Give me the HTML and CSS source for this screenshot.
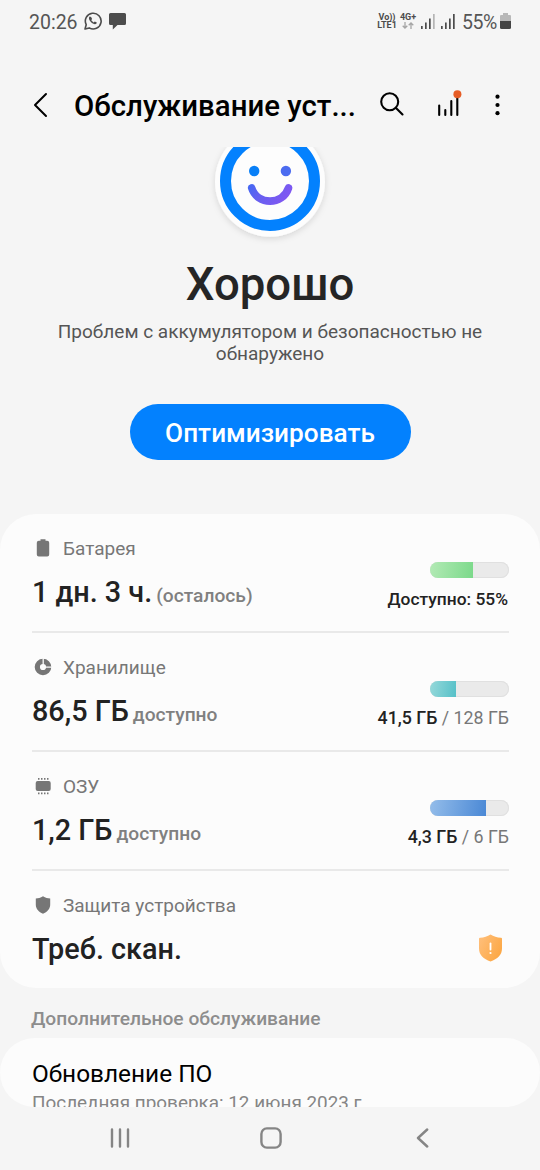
FILE: index.html
```html
<!DOCTYPE html>
<html lang="ru">
<head>
<meta charset="utf-8">
<title>Обслуживание устройства</title>
<link rel="stylesheet" href="styles.css">
</head>
<body>
<div class="screen">
  <div class="statusbar">
    <span class="clock">20:26</span>
    <svg class="wa" width="18" height="18" viewBox="0 0 18 18" fill="none" stroke="#4c4c4c" stroke-width="1.6"><path d="M1 17l1.2-4.300A7.900 7.900 0 1 1 5.200 15.900z" stroke-linejoin="round"/><path d="M5.600 4.600c-1.400 1.300-.6 3.600 1.300 5.500s4.400 2.900 5.600 1.500l.3-1-2-1.200-1.200 1c-1-.5-1.900-1.300-2.300-2.300l.8-1-1-2.200z" fill="#4c4c4c" stroke="none"/></svg>
    <svg class="msg" width="17" height="17" viewBox="0 0 17 17" fill="#4c4c4c"><path d="M1.500 0h14A1.500 1.500 0 0 1 17 1.500v9a1.500 1.500 0 0 1-1.500 1.500H8.500L3.800 16.500V12H1.500A1.500 1.500 0 0 1 0 10.500v-9A1.500 1.500 0 0 1 1.500 0z"/></svg>
    <span class="grow"></span>
    <span class="net lte"><b>Vo))</b><b>LTE1</b></span>
    <span class="net four"><b>4G+</b><svg width="12" height="7" viewBox="0 0 12 7" fill="none" stroke="#a5a5a5" stroke-width="1.300"><path d="M3 0v6M.7 3.700L3 6l2.300-2.300M9 7V1M6.700 3.300L9 1l2.300 2.300"/></svg></span>
    <svg class="sig" width="14" height="15" viewBox="0 0 14 15" fill="#4c4c4c"><path d="M0 12h1.700v3H0zM4 8.500h1.700V15H4zM8 4.500h1.700V15H8z"/><path d="M12 0h1.700v15H12z" fill="#b5b5b5"/></svg>
    <svg class="sig sig2" width="14" height="15" viewBox="0 0 14 15" fill="#4c4c4c"><path d="M0 12h1.700v3H0zM4 8.500h1.700V15H4zM8 4.500h1.700V15H8zM12 0h1.700v15H12z"/></svg>
    <span class="pct">55%</span>
    <svg class="bat" width="11" height="16" viewBox="0 0 11 16"><path d="M3 0h5v2h2a1 1 0 0 1 1 1v5H0V3a1 1 0 0 1 1-1h2z" fill="#b8b8b8"/><path d="M0 8h11v6.500a1.500 1.500 0 0 1-1.500 1.500h-8A1.500 1.500 0 0 1 0 14.500z" fill="#444"/></svg>
  </div>
  <header class="appbar">
    <svg class="back" width="15" height="26" viewBox="0 0 15 26" fill="none" stroke="#000" stroke-width="2" stroke-linecap="round" stroke-linejoin="round"><path d="M13 2L2 13l11 11"/></svg>
    <h1>Обслуживание уст...</h1>
    <svg class="search" width="24" height="24" viewBox="0 0 24 24" fill="none" stroke="#000" stroke-width="2.100" stroke-linecap="round"><circle cx="9.700" cy="9.700" r="8.500"/><path d="M16 16l6.500 6.500"/></svg>
    <svg class="stats" width="25" height="27" viewBox="0 0 25 27"><path d="M2.200 15.500V25M8.300 20v5M14.300 11v14M20.300 6v19" fill="none" stroke="#000" stroke-width="2.100" stroke-linecap="round"/><circle cx="20.400" cy="4.300" r="4" fill="#e65d26"/></svg>
    <svg class="more" width="5" height="22" viewBox="0 0 5 22"><circle cx="2.500" cy="2.700" r="2.100"/><circle cx="2.500" cy="11" r="2.100"/><circle cx="2.500" cy="19.200" r="2.100"/></svg>
  </header>
  <main class="content">
    <section class="hero">
      <svg class="face" width="140" height="104" viewBox="0 0 140 104">
        <defs>
          <linearGradient id="mood" gradientUnits="userSpaceOnUse" x1="45" y1="24" x2="86" y2="56"><stop offset="0" stop-color="#2a70f5"/><stop offset=".5" stop-color="#6560f0"/><stop offset="1" stop-color="#8257f2"/></linearGradient>
          <filter id="shade" x="-20%" y="-20%" width="140%" height="140%"><feDropShadow dx="0" dy="2" stdDeviation="3" flood-opacity=".13"/></filter>
        </defs>
        <circle cx="70" cy="34.700" r="55" fill="#fdfdfd" filter="url(#shade)"/>
        <circle cx="70" cy="34" r="44.500" fill="none" stroke="#0381fe" stroke-width="11"/>
        <circle cx="54.200" cy="24" r="5.200" fill="#087ff7"/><circle cx="85.900" cy="24" r="5.200" fill="#4c6cf0"/>
        <path d="M51.700 41C57 58.500 83 58.500 88.500 41" fill="none" stroke="url(#mood)" stroke-width="7.600" stroke-linecap="round"/>
      </svg>
      <h2>Хорошо</h2>
      <p>Проблем с аккумулятором и безопасностью не<br>обнаружено</p>
      <button>Оптимизировать</button>
    </section>
    <section class="card">
      <div class="row">
        <div class="info">
          <div class="label"><svg width="22" height="20" viewBox="0 0 22 20" fill="#767676"><path d="M8.500 1.200h5v1.500h1.700a2 2 0 0 1 2 2V16.500a2 2 0 0 1-2 2H6.800a2 2 0 0 1-2-2V4.700a2 2 0 0 1 2-2h1.700z"/></svg><span>Батарея</span></div>
          <div class="value"><strong>1 дн. 3 ч.</strong><em>(осталось)</em></div>
        </div>
        <div class="usage"><div class="bar"><i class="green" style="width:55%"></i></div><div class="detail avail"><b>Доступно: 55%</b></div></div>
      </div>
      <div class="row">
        <div class="info">
          <div class="label"><svg width="22" height="20" viewBox="0 0 22 20" fill="none"><circle cx="11" cy="10" r="5.700" stroke="#767676" stroke-width="5.200"/><path d="M11.200 10V1M11 10.200h9" stroke="#fcfcfc" stroke-width="1.300"/></svg><span>Хранилище</span></div>
          <div class="value"><strong>86,5 ГБ</strong><em>доступно</em></div>
        </div>
        <div class="usage"><div class="bar"><i class="teal" style="width:33%"></i></div><div class="detail"><b>41,5 ГБ</b> / 128 ГБ</div></div>
      </div>
      <div class="row">
        <div class="info">
          <div class="label"><svg width="22" height="20" viewBox="0 0 22 20" fill="#767676"><rect x="3.700" y="5" width="15" height="10" rx="2"/><path d="M6 2.800h10.500M6 17.300h10.500" stroke="#767676" stroke-width="1.800" stroke-dasharray="1.500 1.500"/></svg><span>ОЗУ</span></div>
          <div class="value"><strong>1,2 ГБ</strong><em>доступно</em></div>
        </div>
        <div class="usage"><div class="bar"><i class="blue" style="width:71.500%"></i></div><div class="detail"><b>4,3 ГБ</b> / 6 ГБ</div></div>
      </div>
      <div class="row last">
        <div class="info">
          <div class="label"><svg width="22" height="20" viewBox="0 0 22 20" fill="#767676"><path d="M11 1.200c2.500 1.500 4.800 2.100 7.200 2.300v6.300c0 4-3 7.200-7.200 9-4.200-1.800-7.200-5-7.200-9V3.500C6.200 3.300 8.500 2.700 11 1.200z"/></svg><span>Защита устройства</span></div>
          <div class="value"><strong>Треб. скан.</strong></div>
        </div>
        <svg class="alert" width="23" height="28" viewBox="0 0 23 28"><defs><linearGradient id="amber" x1="0" y1="0" x2="1" y2=".6"><stop offset="0" stop-color="#ffc07d"/><stop offset="1" stop-color="#fca846"/></linearGradient></defs><path d="M11.500.5c3 2 6.500 3 10.500 3.300a1 1 0 0 1 1 1V14.500c0 6.500-4.500 10.500-11.500 13C4.500 25 0 21 0 14.500V4.800a1 1 0 0 1 1-1C5 3.500 8.500 2.500 11.500.5z" fill="url(#amber)"/><path d="M11.500 9.500v6" stroke="#fff" stroke-width="1.800" stroke-linecap="round"/><circle cx="11.500" cy="19" r="1.100" fill="#fff"/></svg>
      </div>
    </section>
    <h3>Дополнительное обслуживание</h3>
    <section class="card update">
      <div class="name">Обновление ПО</div>
      <div class="note">Последняя проверка: 12 июня 2023 г.</div>
    </section>
  </main>
  <nav class="navbar">
    <svg width="20" height="20" viewBox="0 0 20 20" stroke="#858585" stroke-width="2.400" stroke-linecap="round"><path d="M2 1.500v17M10 1.500v17M18 1.500v17"/></svg>
    <svg class="home" width="22" height="22" viewBox="0 0 22 22" fill="none" stroke="#858585" stroke-width="2.400"><rect x="1.400" y="1.400" width="19.200" height="19.200" rx="5.500"/></svg>
    <svg width="13" height="20" viewBox="0 0 13 20" fill="none" stroke="#858585" stroke-width="2.400" stroke-linecap="round" stroke-linejoin="round"><path d="M11.200 1.500L2 10l9.200 8.500"/></svg>
  </nav>
</div>
</body>
</html>
```
FILE: styles.css
```css
* { box-sizing: border-box; }
body { margin: 0; background: #f5f5f5; font-family: Roboto, sans-serif; }
svg { display: block; flex: none; }
h1, h2, h3, p { margin: 0; }
.screen { width: 540px; height: 1170px; display: flex; flex-direction: column; overflow: hidden; white-space: nowrap; }

.statusbar { height: 44px; display: flex; align-items: center; padding: 0 29px 0 29px; color: #555; font-size: 19.500px; }
.clock { width: 55px; }
.wa { margin-top: -2px; }
.msg { margin: -2px 0 0 7px; }
.grow { flex: 1; }
.net { display: flex; flex-direction: column; align-items: center; font-size: 9px; line-height: 8.500px; margin-top: -2px; color: #4c4c4c; }
.net b { font-weight: 700; }
.lte { width: 20px; margin-right: 3px; }
.four { width: 16px; margin-right: 5px; gap: 1px; }
.sig { margin-top: -1px; }
.sig2 { margin-left: 6px; }
.pct { margin-left: 7px; width: 38px; letter-spacing: -0.500px; }
.bat { margin-top: -2px; }

.appbar { height: 103px; display: flex; align-items: center; padding: 18px 40px 0 33px; }
.appbar h1 { width: 332px; padding: 2px 0 0 26px; font-size: 29.400px; font-weight: 500; line-height: 36px; }
.search { margin-top: -1px; }
.stats { margin-left: 33px; margin-top: -3px; }
.more { margin-left: auto; }

.content { height: 960px; overflow: hidden; }
.hero { height: 367px; display: flex; flex-direction: column; align-items: center; text-align: center; }
.hero h2 { margin-top: 7px; font-size: 45.500px; line-height: 54px; font-weight: 500; color: #252525; }
.hero p { margin-top: 9px; font-size: 19px; line-height: 22px; color: #555; }
.hero button { margin-top: 39px; width: 281px; height: 56px; padding: 0; border: 0; border-radius: 28px; background: #0381fe; color: #fff; font: 500 26.200px/58px Roboto, sans-serif; }

.card { background: #fcfcfc; border-radius: 36px; }
.row { height: 119px; margin: 0 31px 0 32px; display: flex; justify-content: space-between; border-bottom: 2px solid #e9e9e9; }
.last { height: 117px; border: 0; }
.info { padding-top: 23px; }
.label { display: flex; align-items: center; gap: 9px; height: 24px; font-size: 19px; line-height: 24px; color: #777; }
.label svg { margin-top: -3px; }
.value { display: flex; align-items: baseline; gap: 4px; margin-top: 13px; line-height: 36px; }
.value strong { font-size: 28.800px; font-weight: 500; color: #222; }
.value em { font-style: normal; font-weight: 500; font-size: 19.200px; color: #808080; }
.usage { padding-top: 48px; display: flex; flex-direction: column; align-items: flex-end; }
.bar { width: 79px; height: 16px; border-radius: 8px; background: #eaeaea; overflow: hidden; box-shadow: inset 0 0 0 1px #e0e0e0; }
.bar i { display: block; height: 16px; }
.green { background: linear-gradient(100deg, #b3eab5, #7bd98a); }
.teal { background: linear-gradient(100deg, #96d9da, #55c0c8); }
.blue { background: linear-gradient(100deg, #94bdea, #4a88d5); }
.detail { margin-top: 10px; font-size: 17.800px; line-height: 22px; color: #777; }
.detail b { font-weight: 500; color: #222; }
.avail { padding-right: 1px; font-size: 17.400px; }
.alert { margin: 63px 7px 0 0; }

.content h3 { height: 50px; padding: 19px 0 0 31px; font-size: 19.200px; line-height: 24px; font-weight: 500; color: #8d8d8d; }
.update { height: 69px; padding: 21px 32px 0; overflow: hidden; }
.name { font-size: 24.400px; line-height: 30px; color: #000; }
.note { margin-top: 2px; font-size: 18.900px; line-height: 24px; color: #858585; }

.navbar { height: 63px; display: flex; align-items: center; justify-content: space-between; padding: 0 111px 2px 110px; }
.home { margin: 0 4px 0 0; }
```
